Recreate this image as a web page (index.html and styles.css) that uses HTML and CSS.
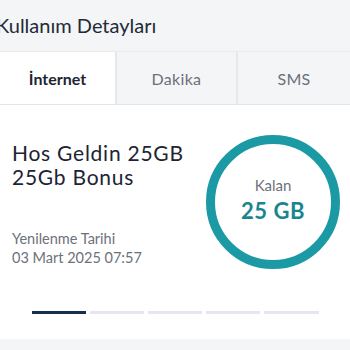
FILE: index.html
```html
<!DOCTYPE html>
<html lang="tr">
<head>
    <meta charset="UTF-8" />
    <meta name="viewport" content="width=device-width, initial-scale=1" />
    <title>Kullanım Detayları</title>
    <link rel="stylesheet" href="styles.css">
</head>
<body>
<div class="page-header">
    <h1>Kullanım Detayları</h1>
</div>

<div class="tabs">
    <a href="#" class="tab active">İnternet</a>
    <a href="#" class="tab">Dakika</a>
    <a href="#" class="tab">SMS</a>
</div>

<div class="usage-card">
    <div class="usage-row">
        <div class="package-info">
            <h2>Hos Geldin 25GB<br>25Gb Bonus</h2>
            <p class="renew">Yenilenme Tarihi<br>03 Mart 2025 07:57</p>
        </div>
        <div class="remaining-ring">
            <span class="ring-label">Kalan</span>
            <span class="ring-value">25 GB</span>
        </div>
    </div>
    <div class="pager">
        <span class="dot current"></span>
        <span class="dot"></span>
        <span class="dot"></span>
        <span class="dot"></span>
        <span class="dot"></span>
    </div>
</div>
</body>
</html>
```

FILE: styles.css
```css
body {
    margin: 0;
    padding: 0;
    background-color: #f4f5f7;
    font-family: Lato, "Open Sans", Arial, sans-serif;
    color: #1d2433;
}
.page-header {
    height: 51px;
    display: flex;
    align-items: center;
}
.page-header h1 {
    margin: 0 0 2px -4px;
    font-size: 20px;
    font-weight: 400;
    color: #232a36;
}
.tabs {
    display: grid;
    grid-template-columns: 115px 119px 1fr;
    gap: 2px;
    background-color: #e5e7eb;
    border-top: 1px solid #e8eaee;
    border-bottom: 1px solid #e3e5ea;
}
.tab {
    height: 52px;
    display: flex;
    align-items: center;
    justify-content: center;
    font-size: 16px;
    color: #6b7079;
    background-color: #f4f5f7;
    text-decoration: none;
    letter-spacing: 0.3px;
}
.tab.active {
    background-color: #fff;
    color: #1d2433;
    font-weight: 700;
    letter-spacing: 0;
}
.usage-card {
    background-color: #fff;
    height: 234px;
    padding-top: 30px;
    box-sizing: border-box;
}
.usage-row {
    display: flex;
    justify-content: space-between;
    padding: 0 10px 0 12px;
}
.package-info h2 {
    margin: 6px 0 0;
    font-size: 21px;
    font-weight: 400;
    line-height: 24px;
    letter-spacing: 0.75px;
    color: #1d2433;
}
.renew {
    margin: 40px 0 0;
    font-size: 14.5px;
    line-height: 19px;
    color: #6d717a;
}
.remaining-ring {
    width: 134px;
    height: 134px;
    box-sizing: border-box;
    border: 9px solid #1b9aa5;
    border-radius: 50%;
    display: flex;
    flex-direction: column;
    align-items: center;
    justify-content: center;
}
.ring-label {
    font-size: 15px;
    color: #6d717a;
    margin-top: -4px;
}
.ring-value {
    margin-top: 3px;
    font-size: 22px;
    font-weight: 700;
    letter-spacing: 0.5px;
    color: #19858f;
}
.pager {
    display: grid;
    grid-template-columns: repeat(5, 1fr);
    gap: 4px;
    width: 287px;
    margin: 42px auto 0;
}
.dot {
    height: 3px;
    background-color: #e6e6ee;
}
.dot.current {
    background-color: #13304f;
}
```
